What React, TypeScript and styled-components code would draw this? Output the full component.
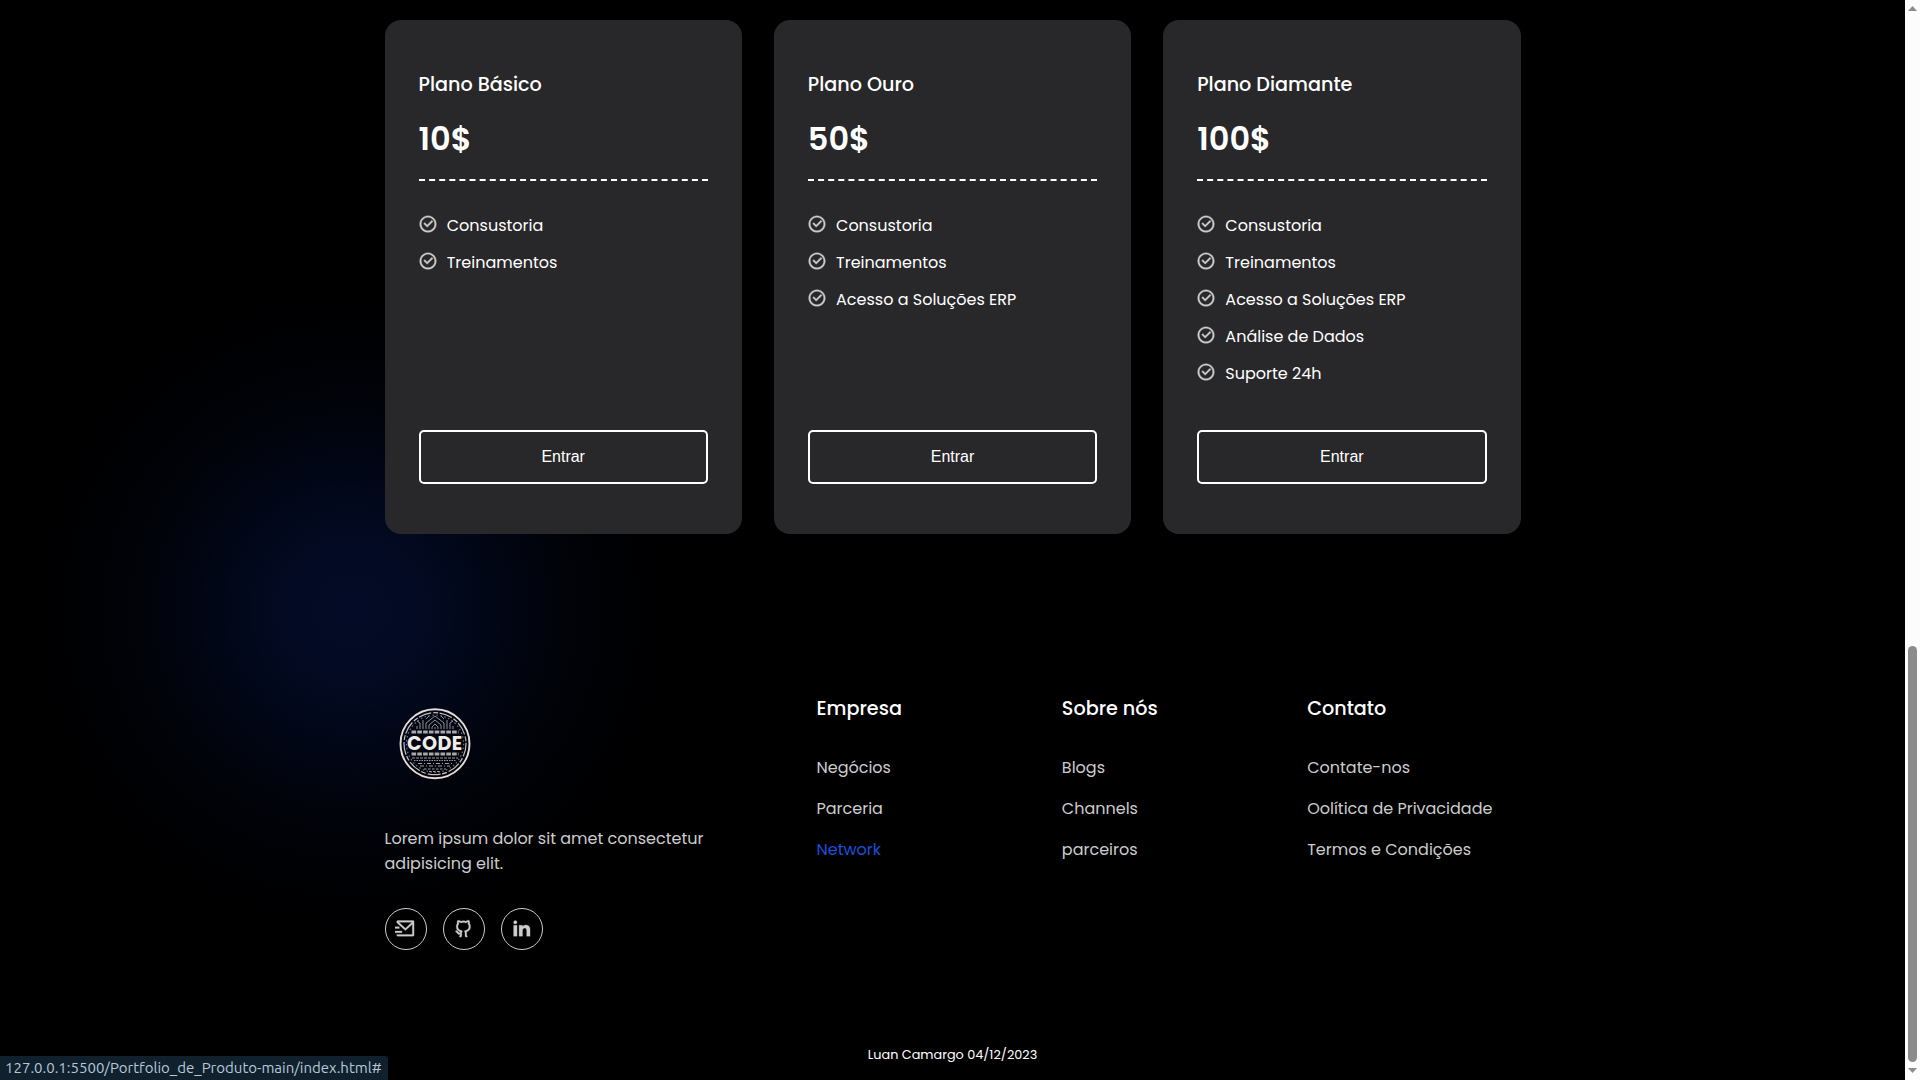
import React from "react";
import styled, { createGlobalStyle } from "styled-components";
import {
  RiCheckboxCircleLine,
  RiGithubLine,
  RiLinkedinFill,
  RiMailSendLine,
} from "react-icons/ri";

const GlobalStyle = createGlobalStyle`
  * { box-sizing: border-box; margin: 0; padding: 0; }
  html, body { background: #000; overflow: hidden; }
  body {
    font-family: "Poppins", "Inter", "Open Sans", sans-serif;
    font-feature-settings: "cv11";
    font-size: 16px;
    line-height: 24px;
  }
  ul { list-style: none; }
  a { text-decoration: none; }
`;

const Window = styled.div`
  position: relative;
  display: flex;
  width: 1920px;
  height: 1080px;
  overflow: hidden;
  background: #000;
`;

const Page = styled.main`
  flex: 1;
  position: relative;
  display: flex;
  flex-direction: column;
  align-items: center;
  padding-top: 20px;
  overflow: hidden;
`;

const Glow = styled.div`
  position: absolute;
  left: 2px;
  top: 260px;
  width: 700px;
  height: 700px;
  border-radius: 50%;
  background: radial-gradient(
    circle closest-side,
    #030b26 0%,
    #030a23 18%,
    #02081b 32%,
    #010512 46%,
    #01030a 59%,
    #000104 76%,
    #000 95%
  );
`;

const Plans = styled.section`
  position: relative;
  display: grid;
  grid-template-columns: repeat(3, 1fr);
  gap: 32px;
  width: 1136px;
  height: 514px;
`;

const Card = styled.article`
  display: flex;
  flex-direction: column;
  padding: 49px 32px 48px;
  border: 2px solid transparent;
  border-radius: 16px;
  background: #28282a;
  background-clip: border-box;
`;

const PlanName = styled.h4`
  margin-bottom: 15px;
  font-size: 19.2px;
  line-height: 28.8px;
  font-weight: 500;
  color: #fff;
`;

const Price = styled.h3`
  padding-bottom: 16px;
  margin-bottom: 33px;
  border-bottom: 2px dashed #fff;
  font-size: 32px;
  line-height: 48px;
  font-weight: 600;
  color: #fff;
`;

const Features = styled.ul`
  flex: 1;
  display: flex;
  flex-direction: column;
  gap: 13px;
`;

const Feature = styled.li`
  display: flex;
  align-items: center;
  gap: 9px;
  height: 24px;
  color: #fff;

  svg {
    flex: none;
    width: 20px;
    height: 20px;
    margin: -3.6px 0 0 -0.8px;
    color: #ccc;
    stroke: #ccc;
    stroke-width: 0.35;
  }
`;

const JoinButton = styled.button`
  height: 54px;
  border: 2px solid #fff;
  border-radius: 5px;
  background: transparent;
  font-family: "Liberation Sans", Arial, sans-serif;
  font-size: 16px;
  color: #fff;
`;

const Footer = styled.footer`
  position: relative;
  display: grid;
  grid-template-columns: 400px repeat(3, 1fr);
  column-gap: 32px;
  width: 1136px;
  margin-top: 160px;
  height: 256px;
`;

const Brand = styled.div`
  display: flex;
  flex-direction: column;
  align-items: flex-start;
`;

const Logo = styled.svg`
  display: block;
  width: 100px;
  height: 100px;
  margin-bottom: 32px;
`;

const About = styled.p`
  max-width: 330px;
  line-height: 25px;
  color: #ccc;
`;

const Socials = styled.div`
  display: flex;
  gap: 16px;
  margin-top: 32px;
`;

const Social = styled.a`
  display: flex;
  align-items: center;
  justify-content: center;
  width: 42px;
  height: 42px;
  border: 1px solid #ccc;
  border-radius: 50%;
  color: #ccc;

  svg {
    width: 20.8px;
    height: 20.8px;
    margin-top: -1px;
    stroke: #ccc;
    stroke-width: 0.3;
  }
`;

const Column = styled.div`
  padding-top: 1px;
`;

const ColumnTitle = styled.h4`
  margin-bottom: 32px;
  font-size: 19.2px;
  line-height: 28.8px;
  font-weight: 500;
  color: #fff;
`;

const Links = styled.div`
  display: flex;
  flex-direction: column;
  gap: 17px;
`;

const FooterLink = styled.a<{ $active?: boolean }>`
  height: 24px;
  color: ${(p) => (p.$active ? "#1d4ed8" : "#ccc")};
`;

const Copyright = styled.p`
  position: relative;
  margin-top: 95px;
  font-size: 12.8px;
  line-height: 20px;
  color: #fff;
`;

const StatusBar = styled.div`
  position: absolute;
  left: 0;
  bottom: 0;
  display: flex;
  align-items: center;
  width: 388px;
  height: 24px;
  padding-left: 5px;
  border-top-right-radius: 3px;
  background: #10202d;
  font-family: "Ubuntu", "Noto Sans", sans-serif;
  font-size: 15px;
  color: #b5cad9;
`;

const Scrollbar = styled.div`
  display: flex;
  flex-direction: column;
  align-items: center;
  width: 15px;
  height: 1080px;
  padding: 6px 0 7px;
  background: #fcfcfc;
`;

const Thumb = styled.div`
  width: 9px;
  height: 416px;
  margin: auto 0 6px;
  border-radius: 5px;
  background: #8b8b8b;
`;

const Arrow = styled.div<{ $down?: boolean }>`
  width: 9px;
  height: 5px;
  background: #8b8b8b;
  clip-path: ${(p) =>
    p.$down ? "polygon(0 0, 100% 0, 50% 100%)" : "polygon(50% 0, 100% 100%, 0 100%)"};
`;

const plans = [
  { name: "Plano Básico", price: "10$", features: ["Consustoria", "Treinamentos"] },
  { name: "Plano Ouro", price: "50$", features: ["Consustoria", "Treinamentos", "Acesso a Soluções ERP"] },
  {
    name: "Plano Diamante",
    price: "100$",
    features: ["Consustoria", "Treinamentos", "Acesso a Soluções ERP", "Análise de Dados", "Suporte 24h"],
  },
];

const columns = [
  { title: "Empresa", links: ["Negócios", "Parceria", "Network"] },
  { title: "Sobre nós", links: ["Blogs", "Channels", "parceiros"] },
  { title: "Contato", links: ["Contate-nos", "Oolítica de Privacidade", "Termos e Condições"] },
];

const activeLink = "Network";

const CodeLogo = () => (
  <Logo viewBox="0 0 100 100" fill="none" stroke="#e6ddd5">
    <circle cx="50" cy="49.7" r="34.5" strokeWidth="1.9" />
    <circle cx="50" cy="49.7" r="31" strokeWidth="1.2" strokeDasharray="13 2 5 1.5" opacity=".85" />
    <circle cx="50" cy="49.7" r="28.6" strokeWidth="1.2" strokeDasharray="1.5 2.5" opacity=".5" />
    <g strokeWidth=".9" opacity=".7">
      <path d="M44 35v-4l6-5 6 5v4M41 35v-6l9-7 9 7v6M47 35v-2l3-3 3 3v2M50 35v-2" />
      <path d="M38 35v-9M35 35v-6l-3-2M32 35v-3M62 35v-9M65 35v-6l3-2M68 35v-3M41 25l3-3M59 25l-3-3" />
    </g>
    <g strokeWidth="2.8" strokeDasharray="4.6 1.2" opacity=".75">
      <path d="M26.5 38h47M26.5 60h47" />
    </g>
    <g strokeWidth="1" opacity=".7">
      <path d="M27 64h46" strokeDasharray="3 1" />
      <path d="M29 66.5h42" strokeDasharray="1.5 1" />
      <path d="M33 69.5h34M35 72h30" strokeDasharray="4 2 1 2" />
      <path d="M39 75h22M44 77.5h12" strokeDasharray="2.5 1.5" />
    </g>
    <text
      x="49.6"
      y="55.9"
      textAnchor="middle"
      textLength="55"
      lengthAdjust="spacing"
      fontFamily="Poppins, Inter, sans-serif"
      fontWeight="700"
      fontSize="19.2"
      fill="#f3ece6"
      stroke="none"
    >
      CODE
    </text>
  </Logo>
);

export default function App() {
  return (
    <Window>
      <GlobalStyle />
      <Page>
        <Glow />
        <Plans>
          {plans.map((plan) => (
            <Card key={plan.name}>
              <PlanName>{plan.name}</PlanName>
              <Price>{plan.price}</Price>
              <Features>
                {plan.features.map((feature) => (
                  <Feature key={feature}>
                    <RiCheckboxCircleLine />
                    {feature}
                  </Feature>
                ))}
              </Features>
              <JoinButton>Entrar</JoinButton>
            </Card>
          ))}
        </Plans>
        <Footer>
          <Brand>
            <CodeLogo />
            <About>Lorem ipsum dolor sit amet consectetur adipisicing elit.</About>
            <Socials>
              <Social><RiMailSendLine /></Social>
              <Social><RiGithubLine /></Social>
              <Social><RiLinkedinFill /></Social>
            </Socials>
          </Brand>
          {columns.map((column) => (
            <Column key={column.title}>
              <ColumnTitle>{column.title}</ColumnTitle>
              <Links>
                {column.links.map((link) => (
                  <FooterLink key={link} $active={link === activeLink}>{link}</FooterLink>
                ))}
              </Links>
            </Column>
          ))}
        </Footer>
        <Copyright>Luan Camargo 04/12/2023</Copyright>
      </Page>
      <Scrollbar>
        <Arrow />
        <Thumb />
        <Arrow $down />
      </Scrollbar>
      <StatusBar>127.0.0.1:5500/Portfolio_de_Produto-main/index.html#</StatusBar>
    </Window>
  );
}
